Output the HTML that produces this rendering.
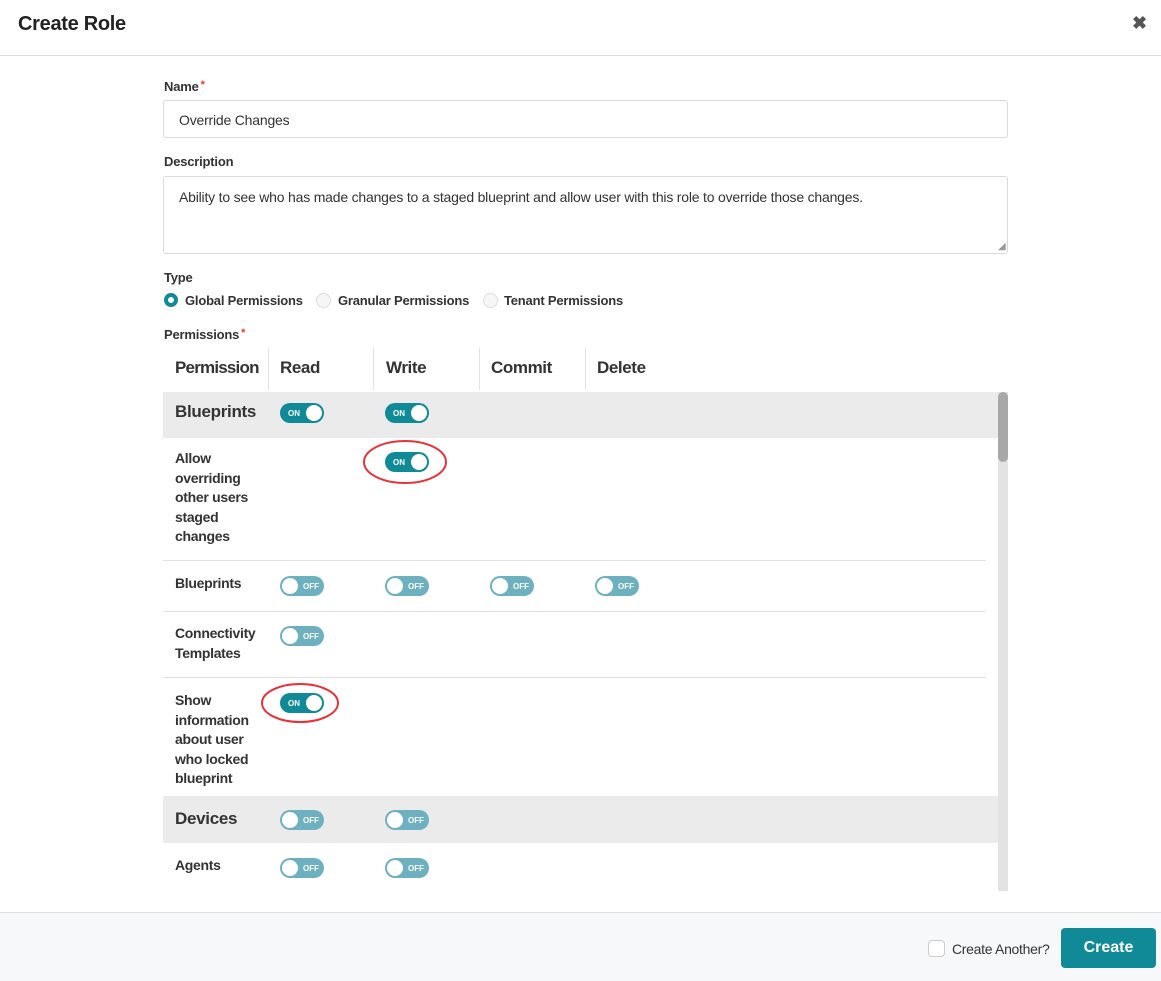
<!DOCTYPE html>
<html><head><meta charset="utf-8"><style>
*{box-sizing:border-box;margin:0;padding:0}
body{width:1161px;height:981px;position:relative;background:#fff;font-family:"Liberation Sans",sans-serif;color:#333;overflow:hidden}
.a{position:absolute}
.lbl{font-size:13px;font-weight:bold;color:#333;letter-spacing:-0.2px}
.star{color:#e33;font-size:11px;vertical-align:top;margin-left:2px}
.inp{border:1px solid #d8dadd;border-radius:3px;font-size:14px;color:#333;padding-left:15px;letter-spacing:-0.2px}
.t{position:absolute;width:44px;height:20px;border-radius:10px;font-size:8px;font-weight:bold;color:#fff}
.t.on{background:#0f8a96}
.t.off{background:#6db0bf}
.t i{position:absolute;top:2px;width:16px;height:16px;border-radius:50%;background:#fff}
.t.on i{right:2px}.t.off i{left:2px}
.t span{position:absolute;top:6px;line-height:9px}
.t.on span{left:8px}.t.off span{left:23px}
.rt{position:absolute;left:175px;font-size:14px;font-weight:bold;color:#333;line-height:19.5px;letter-spacing:-0.3px}
.hl{position:absolute;left:163px;width:823px;height:1px;background:#e2e2e2}
.gray{position:absolute;left:163px;width:835px;background:#ebebeb}
.th{position:absolute;top:358px;font-size:17px;font-weight:bold;color:#333;letter-spacing:-0.4px}
.vd{position:absolute;top:348px;width:1px;height:42px;background:#e2e2e2}
</style></head><body>
<div class="a" style="left:18px;top:13px;font-size:20px;font-weight:bold;color:#222;letter-spacing:-0.3px">Create Role</div>
<div class="a" style="left:1132px;top:13px;font-size:18px;font-weight:bold;color:#555">✖</div>
<div class="a" style="left:0;top:55px;width:1161px;height:1px;background:#dcdde0"></div>

<div class="a lbl" style="left:164px;top:79px">Name<span class="star">*</span></div>
<div class="a inp" style="left:163px;top:100px;width:845px;height:38px;line-height:38px">Override Changes</div>
<div class="a lbl" style="left:164px;top:154px">Description</div>
<div class="a inp" style="left:163px;top:176px;width:845px;height:78px;padding-top:12px">Ability to see who has made changes to a staged blueprint and allow user with this role to override those changes.</div>
<div class="a" style="left:998px;top:241px;font-size:10px;color:#999">◢</div>
<div class="a lbl" style="left:164px;top:270px">Type</div>
<div class="a" style="left:164px;top:293px;width:14px;height:14px;border-radius:50%;border:4px solid #0f8a96"></div>
<div class="a lbl" style="left:185px;top:293px">Global Permissions</div>
<div class="a" style="left:316px;top:293px;width:15px;height:15px;border-radius:50%;border:1px solid #ddd;background:#f6f6f6"></div>
<div class="a lbl" style="left:338px;top:293px">Granular Permissions</div>
<div class="a" style="left:483px;top:293px;width:15px;height:15px;border-radius:50%;border:1px solid #ddd;background:#f6f6f6"></div>
<div class="a lbl" style="left:504px;top:293px">Tenant Permissions</div>
<div class="a lbl" style="left:164px;top:327px">Permissions<span class="star">*</span></div>

<div class="th" style="left:175px;letter-spacing:-0.8px">Permission</div>
<div class="vd" style="left:268px"></div><div class="th" style="left:280px">Read</div>
<div class="vd" style="left:373px"></div><div class="th" style="left:386px">Write</div>
<div class="vd" style="left:479px"></div><div class="th" style="left:491px">Commit</div>
<div class="vd" style="left:585px"></div><div class="th" style="left:597px">Delete</div>

<div class="gray" style="top:392px;height:46px"></div>
<div class="rt" style="top:402px;font-size:17px">Blueprints</div>
<div class="t on" style="left:280px;top:403px"><span>ON</span><i></i></div>
<div class="t on" style="left:385px;top:403px"><span>ON</span><i></i></div>

<div class="rt" style="top:449px">Allow<br>overriding<br>other users<br>staged<br>changes</div>
<div class="t on" style="left:385px;top:452px"><span>ON</span><i></i></div>
<svg class="a" style="left:360px;top:438px" width="92" height="50"><ellipse cx="45" cy="24" rx="41" ry="21" fill="none" stroke="#e8323a" stroke-width="2"/></svg>
<div class="hl" style="top:560px"></div>

<div class="rt" style="top:574px">Blueprints</div>
<div class="t off" style="left:280px;top:576px"><i></i><span>OFF</span></div>
<div class="t off" style="left:385px;top:576px"><i></i><span>OFF</span></div>
<div class="t off" style="left:490px;top:576px"><i></i><span>OFF</span></div>
<div class="t off" style="left:595px;top:576px"><i></i><span>OFF</span></div>
<div class="hl" style="top:611px"></div>

<div class="rt" style="top:624px">Connectivity<br>Templates</div>
<div class="t off" style="left:280px;top:626px"><i></i><span>OFF</span></div>
<div class="hl" style="top:677px"></div>

<div class="rt" style="top:691px">Show<br>information<br>about user<br>who locked<br>blueprint</div>
<div class="t on" style="left:280px;top:693px"><span>ON</span><i></i></div>
<svg class="a" style="left:259px;top:682px" width="84" height="44"><ellipse cx="41" cy="21" rx="38" ry="19" fill="none" stroke="#e8323a" stroke-width="2"/></svg>

<div class="gray" style="top:796px;height:47px"></div>
<div class="rt" style="top:809px;font-size:17px">Devices</div>
<div class="t off" style="left:280px;top:810px"><i></i><span>OFF</span></div>
<div class="t off" style="left:385px;top:810px"><i></i><span>OFF</span></div>

<div class="rt" style="top:856px">Agents</div>
<div class="t off" style="left:280px;top:858px"><i></i><span>OFF</span></div>
<div class="t off" style="left:385px;top:858px"><i></i><span>OFF</span></div>

<div class="a" style="left:998px;top:392px;width:10px;height:499px;background:#e3e3e3"></div>
<div class="a" style="left:998px;top:392px;width:10px;height:70px;border-radius:5px;background:#a8a8a8"></div>

<div class="a" style="left:0;top:912px;width:1161px;height:69px;background:#f7f8fa;border-top:1px solid #dcdde0"></div>
<div class="a" style="left:928px;top:940px;width:17px;height:17px;border:1px solid #ccc;border-radius:4px;background:#fff"></div>
<div class="a" style="left:952px;top:941px;font-size:14px;color:#333;letter-spacing:-0.3px">Create Another?</div>
<div class="a" style="left:1061px;top:928px;width:95px;height:40px;background:#0f8a96;border-radius:4px;color:#fff;font-weight:bold;font-size:16px;text-align:center;line-height:40px">Create</div>
</body></html>
